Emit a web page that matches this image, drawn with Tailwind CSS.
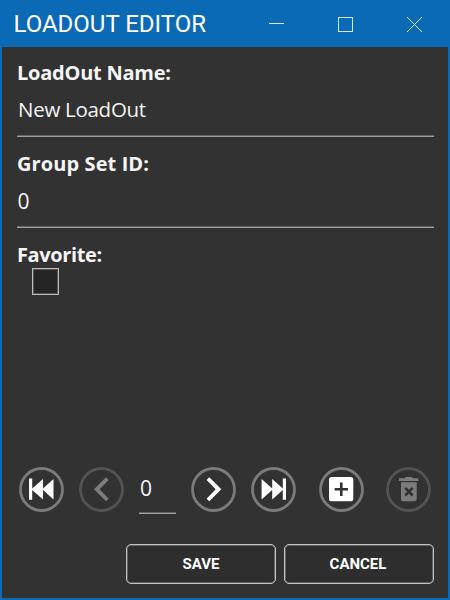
<!DOCTYPE html>
<html lang="en">
<head>
<meta charset="utf-8">
<title>Loadout Editor</title>
<script src="https://cdn.jsdelivr.net/npm/@tailwindcss/browser@4"></script>
</head>
<body class="bg-[#323232]">
<div class="flex h-[600px] w-[450px] flex-col overflow-hidden border-x-2 border-b-2 border-[#0a6ab6] bg-[#323232] font-['Open_Sans','Noto_Sans',sans-serif] text-[#f5f5f5]">
  <header class="flex h-[47px] shrink-0 items-center justify-between bg-[#0a6ab6] pt-[2px] pl-[11.5px] font-[Roboto,sans-serif] text-white">
    <h1 class="text-[24px] leading-[45px] whitespace-nowrap"><span class="inline-block">LOADOUT EDITOR</span></h1>
    <div class="flex pr-[26px]">
      <svg class="mr-[54px] h-[17px] w-[15px]" viewBox="0 0 15 17" fill="none" stroke="#d3e7f7" shape-rendering="crispEdges"><path d="M0 7.5h15"/></svg>
      <svg class="mr-[54px] h-[17px] w-[15px]" viewBox="0 0 15 17" fill="none" stroke="#d3e7f7" shape-rendering="crispEdges"><path d="M.5 1.500h14v14h-14z"/></svg>
      <svg class="h-[17px] w-[15px]" viewBox="0 0 15 17" fill="none" stroke="#d3e7f7"><path d="M0 1l15 15M15 1L0 16"/></svg>
    </div>
  </header>

  <main class="flex flex-col px-[15px] pr-[14px] pt-[11px]">
    <label class="h-[30px] text-[20px] leading-[30px] font-bold tracking-[-0.24px]"><span class="inline-block">LoadOut Name:</span></label>
    <div class="h-[49px] border-b border-[#a0a0a0] pl-px text-[20.5px] leading-[42px] tracking-[-0.28px] shadow-[inset_0_-1px_0_#636363]"><span class="inline-block">New LoadOut</span></div>
    <label class="mt-[12px] h-[30px] text-[20px] leading-[30px] font-bold tracking-[0.1px]"><span class="inline-block">Group Set ID:</span></label>
    <div class="h-[49px] border-b border-[#a0a0a0] pl-[0.5px] text-[21px] leading-[44px] shadow-[inset_0_-1px_0_#636363]">0</div>
    <label class="mt-[12px] h-[28px] text-[20px] leading-[30px] font-bold tracking-[-0.38px]"><span class="inline-block">Favorite:</span></label>
    <div class="ml-[15px] size-[27px] border border-[#bcbcbc] bg-[#252525] shadow-[inset_0_0_0_1px_#555]"></div>
  </main>

  <nav class="mt-auto flex h-[47px] shrink-0 items-start pl-[17px]">
    <svg class="size-[45px]" viewBox="0 0 45 45"><circle cx="22.5" cy="22.5" r="21" fill="none" stroke="#7b7b7b" stroke-width="2.8"/><path fill="#fff" d="M10 11.500h3.200v10L24 12v9.500L34.500 12v20.500L24 23v9.500L13.200 23v9.700H10z"/></svg>
    <svg class="ml-[15px] size-[45px]" viewBox="0 0 45 45"><circle cx="22.500" cy="22.500" r="21" fill="none" stroke="#535353" stroke-width="2.800"/><path fill="#7c7c7c" d="M27 10.300l2.700 2.700-9.100 9.300 9.100 9.400-2.700 2.600-12-12z"/></svg>
    <div class="ml-[15px] h-[47px] w-[37px] border-b border-[#a0a0a0] pl-px text-[21px] leading-[43px] shadow-[inset_0_-1px_0_#636363]">0</div>
    <svg class="ml-[15px] size-[45px]" viewBox="0 0 45 45"><circle cx="22.500" cy="22.500" r="21" fill="none" stroke="#7b7b7b" stroke-width="2.800"/><path fill="#fff" d="M18.300 10.300L15.600 13l9.100 9.300-9.100 9.400 2.700 2.600 12-12z"/></svg>
    <svg class="ml-[15px] size-[45px]" viewBox="0 0 45 45"><circle cx="22.500" cy="22.500" r="21" fill="none" stroke="#7b7b7b" stroke-width="2.800"/><path fill="#fff" d="M35 11.500h-3.200v10L21.200 12v9.500L10.600 12v20.500L21.200 23v9.500L31.800 23v9.700H35z"/></svg>
    <svg class="ml-[23px] size-[45px]" viewBox="0 0 45 45"><circle cx="22.500" cy="22.500" r="21" fill="none" stroke="#7b7b7b" stroke-width="2.800"/><rect x="10" y="10" width="24.300" height="24.300" rx="2.600" fill="#fff"/><path d="M15.700 22.200H29M22.300 15.500V29" stroke="#323232" stroke-width="2.600"/></svg>
    <svg class="ml-[22px] size-[45px]" viewBox="0 0 45 45"><circle cx="22.500" cy="22.500" r="21" fill="none" stroke="#535353" stroke-width="2.800"/><path fill="#7c7c7c" d="M13 11.200h5.500l1.300-1.300h6l1.300 1.300h5.200V14H13zM15 15.300h15.700V32q0 2.300-2.300 2.300H17.300Q15 34.300 15 32z"/><path d="M19.200 20.900l7.400 7.600M26.600 20.900l-7.400 7.600" stroke="#323232" stroke-width="2.700"/></svg>
  </nav>

  <footer class="mt-[30px] mb-[14px] flex shrink-0 justify-end gap-2 pr-[14px] font-[Roboto,sans-serif] text-[15px] font-bold text-white">
    <button class="h-10 w-[150px] rounded-[5px] border border-[#c4c4c4] bg-[#2e2e2e] leading-[38px] shadow-[inset_0_0_0_1px_#606060]"><span class="inline-block">SAVE</span></button>
    <button class="h-10 w-[150px] rounded-[5px] border border-[#c4c4c4] bg-[#2e2e2e] pr-[2px] leading-[38px] shadow-[inset_0_0_0_1px_#606060]"><span class="inline-block">CANCEL</span></button>
  </footer>
</div>
</body>
</html>
